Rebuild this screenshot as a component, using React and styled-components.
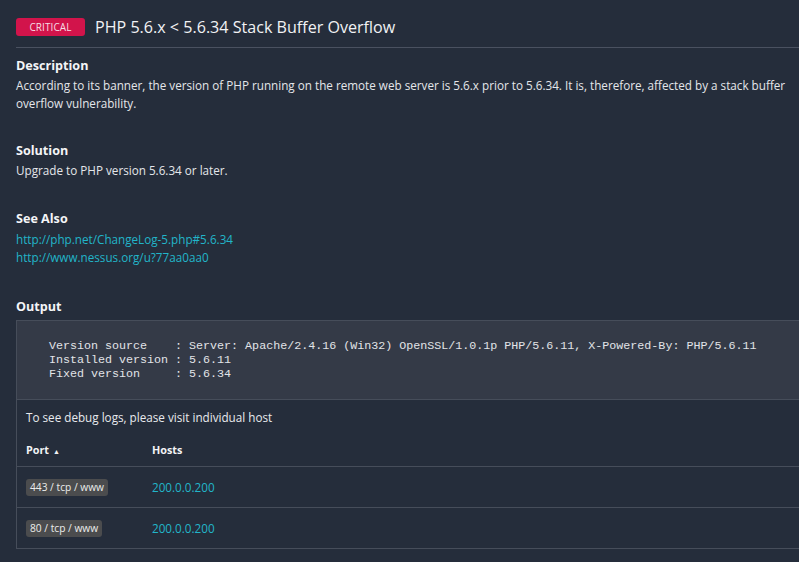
import React from "react";
import styled, { createGlobalStyle } from "styled-components";

const Global = createGlobalStyle`
  html, body { margin: 0; padding: 0; background: #252d3b; overflow: hidden; }
  body { font-family: "Open Sans", "Noto Sans", sans-serif; color: #e6e8eb; }
`;

const Page = styled.div`
  padding: 14px 0 0 16px;
  width: 820px;
`;

const Header = styled.div`
  display: flex;
  align-items: center;
  gap: 10px;
  padding: 2px 0 9px;
  border-bottom: 1px solid #4a5160;
`;

const Severity = styled.span`
  display: inline-flex;
  align-items: center;
  justify-content: center;
  width: 69px;
  height: 18px;
  border-radius: 3px;
  background: #d2144b;
  color: #f6dde4;
  font-size: 10px;
  letter-spacing: 0.1px;
`;

const Title = styled.h1`
  margin: 0;
  font-size: 16.1px;
  font-weight: 400;
  color: #f1f2f4;
  line-height: 22px;
`;

const Section = styled.section`
  margin-top: ${(p) => p.$top || 30}px;
`;

const Heading = styled.h3`
  margin: 0;
  font-size: 12.6px;
  font-weight: 700;
  line-height: 18px;
  color: #f4f5f7;
`;

const Body = styled.p`
  margin: 1px 0 0;
  font-size: 11.7px;
  line-height: 18px;
  color: #e4e6ea;
  width: 785px;
`;

const LinkList = styled.div`
  margin-top: 2px;
  display: flex;
  flex-direction: column;
`;

const Link = styled.a`
  font-size: 11.7px;
  line-height: 18px;
  color: #22b5c9;
  text-decoration: none;
`;

const OutputBox = styled.div`
  margin-top: 4px;
  border: 1px solid #464d5a;
`;

const Pre = styled.pre`
  margin: 0;
  padding: 18px 0 18px 32px;
  background: #343a47;
  border-bottom: 1px solid #464d5a;
  font-family: "Liberation Mono", "DejaVu Sans Mono", monospace;
  font-size: 11.68px;
  line-height: 14px;
  color: #e2e4e8;
`;

const Note = styled.div`
  padding: 8px 9px 0;
  font-size: 11.7px;
  line-height: 18px;
  color: #e8eaee;
`;

const Table = styled.div`
  margin-top: 16px;
  display: flex;
  flex-direction: column;
`;

const Row = styled.div`
  display: grid;
  grid-template-columns: 126px 1fr;
  padding: 0 9px;
  height: ${(p) => (p.$head ? 24 : 40)}px;
  border-bottom: ${(p) => (p.$last ? "none" : "1px solid #464d5a")};
  align-items: ${(p) => (p.$head ? "start" : "center")};
`;

const HeadCell = styled.div`
  font-size: 10.8px;
  font-weight: 700;
  color: #f2f3f5;
  line-height: 16px;
  display: flex;
  align-items: center;
  gap: 4px;
`;

const SortArrow = styled.span`
  font-size: 7px;
  line-height: 1;
  margin-top: 2px;
`;

const PortTag = styled.span`
  justify-self: start;
  display: inline-flex;
  align-items: center;
  height: 17px;
  padding: 0 4px;
  border-radius: 3px;
  background: #4b4c4e;
  color: #ececec;
  font-size: 10.2px;
`;

const HostLink = styled.a`
  font-size: 11.7px;
  color: #22b5c9;
  text-decoration: none;
`;

const output = `Version source    : Server: Apache/2.4.16 (Win32) OpenSSL/1.0.1p PHP/5.6.11, X-Powered-By: PHP/5.6.11
Installed version : 5.6.11
Fixed version     : 5.6.34`;

const hosts = [
  { port: "443 / tcp / www", host: "200.0.0.200" },
  { port: "80 / tcp / www", host: "200.0.0.200" },
];

export default function App() {
  return (
    <>
      <Global />
      <Page>
        <Header>
          <Severity>CRITICAL</Severity>
          <Title>PHP 5.6.x &lt; 5.6.34 Stack Buffer Overflow</Title>
        </Header>

        <Section $top={9}>
          <Heading>Description</Heading>
          <Body>
            According to its banner, the version of PHP running on the remote web server is 5.6.x prior to 5.6.34. It is, therefore, affected by a stack buffer overflow vulnerability.
          </Body>
        </Section>

        <Section $top={30}>
          <Heading>Solution</Heading>
          <Body>Upgrade to PHP version 5.6.34 or later.</Body>
        </Section>

        <Section $top={31}>
          <Heading>See Also</Heading>
          <LinkList>
            <Link href="#">http://php.net/ChangeLog-5.php#5.6.34</Link>
            <Link href="#">http://www.nessus.org/u?77aa0aa0</Link>
          </LinkList>
        </Section>

        <Section $top={32}>
          <Heading>Output</Heading>
          <OutputBox>
            <Pre>{output}</Pre>
            <Note>To see debug logs, please visit individual host</Note>
            <Table>
              <Row $head>
                <HeadCell>
                  Port <SortArrow>▲</SortArrow>
                </HeadCell>
                <HeadCell>Hosts</HeadCell>
              </Row>
              {hosts.map((h, i) => (
                <Row key={h.port} $last={i === hosts.length - 1}>
                  <PortTag>{h.port}</PortTag>
                  <HostLink href="#">{h.host}</HostLink>
                </Row>
              ))}
            </Table>
          </OutputBox>
        </Section>
      </Page>
    </>
  );
}
